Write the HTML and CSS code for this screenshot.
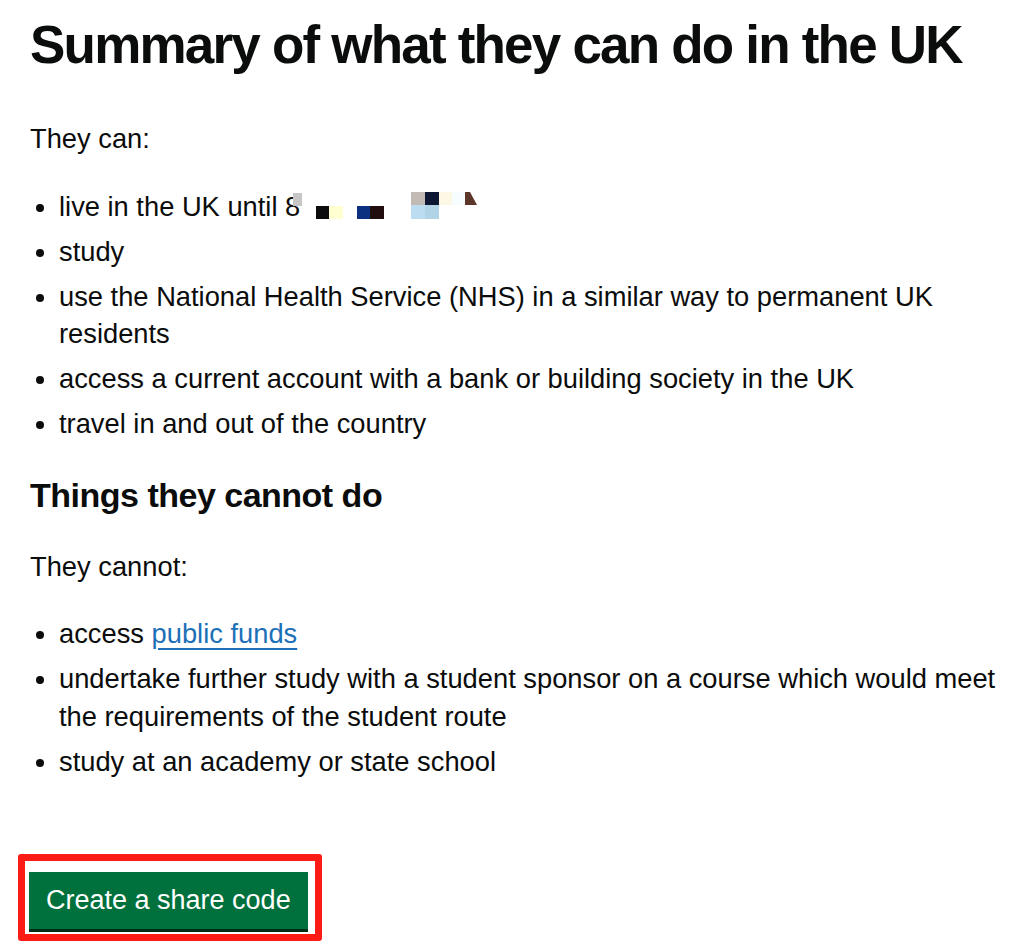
FILE: index.html
```html
<!DOCTYPE html>
<html lang="en">
<head>
<meta charset="utf-8">
<title>Summary of what they can do in the UK</title>
<link rel="stylesheet" href="styles.css">
</head>
<body>
<main class="page">
  <h1 class="heading-l">Summary of what they can do in the UK</h1>
  <p class="body">They can:</p>
  <ul class="bullets">
    <li>live in the UK until 8<svg class="redact" width="185" height="27" viewBox="0 0 185 27" aria-hidden="true">
        <polygon points="0,1 9,1 9,14 0,14" fill="#c6c6c6"/>
        <rect x="23" y="14" width="13" height="13" fill="#0c0c0e"/>
        <rect x="36" y="14" width="14" height="13" fill="#ffffd2"/>
        <rect x="64" y="14" width="13" height="13" fill="#0b3080"/>
        <rect x="77" y="14" width="14" height="13" fill="#210d0d"/>
        <rect x="118" y="0" width="14" height="13" fill="#c2bbb5"/>
        <rect x="132" y="0" width="14" height="13" fill="#0d1632"/>
        <rect x="146" y="0" width="13" height="13" fill="#fdf7e6"/>
        <rect x="159" y="0" width="13" height="13" fill="#f7fdff"/>
        <rect x="118" y="13" width="14" height="14" fill="#bcdcf1"/>
        <rect x="132" y="13" width="14" height="14" fill="#b0d3e6"/>
        <polygon points="172,0 177,0 184,13 172,13" fill="#5b3629"/>
      </svg></li>
    <li>study</li>
    <li>use the National Health Service (NHS) in a similar way to permanent UK residents</li>
    <li>access a current account with a bank or building society in the UK</li>
    <li>travel in and out of the country</li>
  </ul>
  <h2 class="heading-m">Things they cannot do</h2>
  <p class="body">They cannot:</p>
  <ul class="bullets">
    <li>access <a class="link" href="#">public funds</a></li>
    <li>undertake further study with a student sponsor on a course which would meet the requirements of the student route</li>
    <li>study at an academy or state school</li>
  </ul>
  <div class="highlight">
    <button class="button" type="button">Create a share code</button>
  </div>
</main>
</body>
</html>
```
FILE: styles.css
```css
html, body {
  margin: 0;
  padding: 0;
  background: #ffffff;
}

body {
  font-family: "Liberation Sans", Arial, sans-serif;
  color: #0b0c0c;
}

.page {
  padding: 15px 0 0 30px;
}

.heading-l {
  margin: 0 0 45px;
  font-size: 53px;
  line-height: 60px;
  font-weight: 700;
  letter-spacing: -1.8px;
}

.heading-m {
  margin: 0 0 30px;
  font-size: 34px;
  line-height: 45px;
  font-weight: 700;
  letter-spacing: -0.5px;
}

.body {
  margin: 0 0 30px;
  font-size: 27.3px;
  line-height: 37.5px;
}

.bullets {
  margin: 0 0 30px;
  padding-left: 29px;
  font-size: 27.3px;
  line-height: 37.5px;
  list-style-type: disc;
}

.bullets li {
  margin-bottom: 7.5px;
}

.redact {
  display: inline-block;
  vertical-align: -3px;
  margin-left: -7px;
}

.link {
  color: #1d70b8;
  text-decoration: underline;
  text-decoration-thickness: 2px;
  text-underline-offset: 5px;
}

.highlight {
  display: inline-block;
  margin: 44px 0 0 -12px;
  padding: 11px 7px 5px 4px;
  border: 7px solid #fd1c15;
  border-radius: 3px;
}

.button {
  display: block;
  margin: 0;
  padding: 12px 17px 12px;
  border: 0;
  border-radius: 0;
  background: #00703c;
  box-shadow: 0 3px 0 #002d18;
  color: #ffffff;
  font-family: "Liberation Sans", Arial, sans-serif;
  font-size: 27px;
  line-height: 33px;
  cursor: pointer;
}
```
